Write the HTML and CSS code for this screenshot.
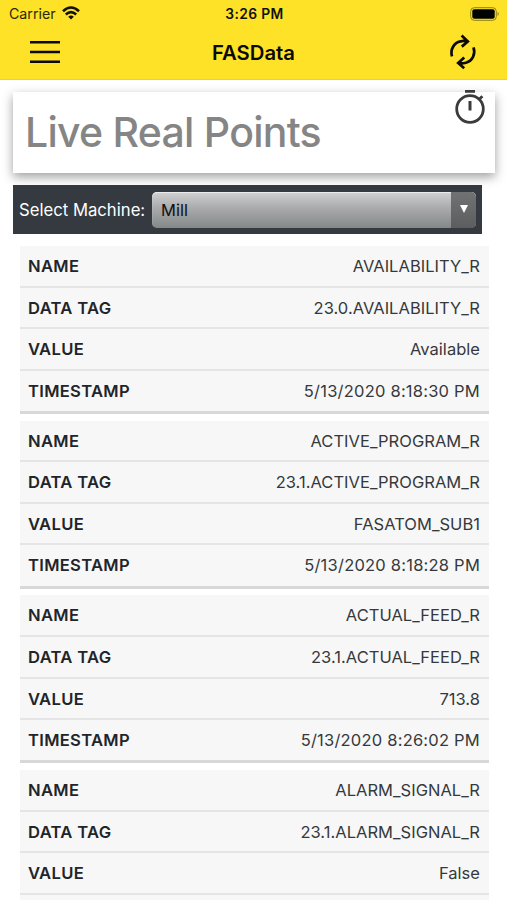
FILE: index.html
```html
<!DOCTYPE html>
<html lang="en">
<head>
<meta charset="utf-8">
<title>FASData</title>
<link rel="stylesheet" href="styles.css">
</head>
<body>
<header class="top">
  <div class="status">
    <div class="carrier"><span>Carrier</span>
      <svg width="18" height="14" viewBox="0 0 18 14" fill="none" stroke="#111" stroke-width="2.6"><path d="M1 5.2Q9-2.2 17 5.2M3.8 8.5Q9 3.8 14.2 8.5"/><path d="M6.2 10.7Q9 8.3 11.8 10.7L9 13.6Z" fill="#111" stroke="none"/></svg>
    </div>
    <div class="clock">3:26 PM</div>
    <svg class="battery" width="30" height="14" viewBox="0 0 30 14"><rect x=".7" y=".7" width="25.6" height="12.6" rx="3.6" fill="none" stroke="#8e7f17"/><rect x="2.3" y="2.3" width="22.4" height="9.4" rx="2" fill="#000"/><path d="M27.6 4.8Q30 7 27.6 9.2Z" fill="#8e7f17"/></svg>
  </div>
  <nav class="nav">
    <svg class="menu" width="30" height="24" viewBox="0 0 30 24" stroke="#0c0a00" stroke-width="2.4"><path d="M0 2.2H30M0 12H30M0 21.8H30"/></svg>
    <h1>FASData</h1>
    <svg class="sync" width="28" height="36" viewBox="0 0 28 36" fill="none" stroke="#0c0a00" stroke-width="2.7"><path d="M3 22.4C1 15.5 5 8.5 11.5 7.3Q15 6.6 18 7.4M12.6 1.6L18.8 7.5L12.8 12.6M24.5 13.4C26.8 20 23.5 27 17 28.7Q13 29.8 9.4 29M15.2 23.4L9.2 29L15.2 34.3"/></svg>
  </nav>
</header>
<main>
  <section class="title">
    <h2>Live Real Points</h2>
    <svg class="timer" width="32" height="36" viewBox="0 0 32 36" fill="none" stroke="#3b3b3b" stroke-width="2.8"><circle cx="15" cy="20" r="13.3"/><path d="M10 2.3H20M24.2 10.2L27.4 7.3"/><path d="M15 12V21.5" stroke-width="3"/></svg>
  </section>
  <div class="picker">
    <span class="label">Select Machine:</span>
    <div class="select"><span class="chosen">Mill</span><span class="arrow"><svg width="8" height="8" viewBox="0 0 8 8"><path d="M0 0H8L4 8Z" fill="#fff"/></svg></span></div>
  </div>
  <div class="points">
    <dl>
      <div><dt>NAME</dt><dd>AVAILABILITY_R</dd></div>
      <div><dt>DATA TAG</dt><dd>23.0.AVAILABILITY_R</dd></div>
      <div><dt>VALUE</dt><dd>Available</dd></div>
      <div><dt>TIMESTAMP</dt><dd class="time">5/13/2020 8:18:30 PM</dd></div>
    </dl>
    <dl>
      <div><dt>NAME</dt><dd>ACTIVE_PROGRAM_R</dd></div>
      <div><dt>DATA TAG</dt><dd>23.1.ACTIVE_PROGRAM_R</dd></div>
      <div><dt>VALUE</dt><dd>FASATOM_SUB1</dd></div>
      <div><dt>TIMESTAMP</dt><dd class="time">5/13/2020 8:18:28 PM</dd></div>
    </dl>
    <dl>
      <div><dt>NAME</dt><dd>ACTUAL_FEED_R</dd></div>
      <div><dt>DATA TAG</dt><dd>23.1.ACTUAL_FEED_R</dd></div>
      <div><dt>VALUE</dt><dd>713.8</dd></div>
      <div><dt>TIMESTAMP</dt><dd class="time">5/13/2020 8:26:02 PM</dd></div>
    </dl>
    <dl>
      <div><dt>NAME</dt><dd>ALARM_SIGNAL_R</dd></div>
      <div><dt>DATA TAG</dt><dd>23.1.ALARM_SIGNAL_R</dd></div>
      <div><dt>VALUE</dt><dd>False</dd></div>
      <div></div>
    </dl>
  </div>
</main>
</body>
</html>
```
FILE: styles.css
```css
* { box-sizing: border-box; }
html, body { height: 900px; overflow: hidden; }
body { margin: 0; background: #fff; color: #212529; font-family: Inter, "Liberation Sans", sans-serif; }
h1, h2, dl, dd, dt { margin: 0; }
svg { display: block; }

.top { height: 80px; background: #fee227; border-bottom: 1px solid #e4cf5c; color: #111; }
.status { height: 27px; display: grid; grid-template-columns: 1fr auto 1fr; align-items: center; padding: 0 7px 0 9px; }
.carrier { display: flex; align-items: center; gap: 6px; font-size: 14.2px; color: #2b2706; }
.carrier svg { margin-top: -2px; }
.clock { font-size: 13.8px; font-weight: 600; letter-spacing: .4px; }
.battery { justify-self: end; }
.nav { height: 50px; display: grid; grid-template-columns: 1fr auto 1fr; align-items: center; padding: 0 30px; }
.nav h1 { font-size: 20.3px; font-weight: 600; line-height: 24px; color: #0c0a00; padding-top: 1px; }
.sync { justify-self: end; }

main { padding: 12px 12px 0 13px; }
.title { position: relative; height: 81px; background: #fff; box-shadow: 0 4px 10px rgba(0,0,0,.38); padding: 15px 12px; }
.title h2 { font-size: 41px; line-height: 51px; font-weight: 450; letter-spacing: -.75px; color: #858585; white-space: nowrap; }
.timer { position: absolute; right: 8px; top: -3px; }

.picker { width: 469px; height: 49px; margin-top: 12px; display: flex; align-items: center; background: #343a40; padding: 0 6px; }
.label { width: 133px; font-size: 16.7px; color: #fff; white-space: nowrap; }
.select { flex: 1; height: 36px; display: flex; border-radius: 5px; overflow: hidden; background: linear-gradient(#d0d1d2, #a8aaab 45%, #858889); box-shadow: inset 0 1px 1px #eee; }
.chosen { flex: 1; padding-left: 9px; font-size: 16.5px; line-height: 36px; color: #111; }
.arrow { width: 25px; display: flex; justify-content: center; padding-top: 13px; background: linear-gradient(#707273, #5b5d5e); }

.points { width: 469px; margin: 12px 0 0 7px; }
dl { margin-bottom: 6.7px; }
dl > div { height: 41.6px; display: flex; justify-content: space-between; background: #f7f7f7; border-bottom: 2px solid #e5e5e5; padding: 0 9px 0 8px; line-height: 40px; }
dl > div:last-child { height: 43.2px; border-bottom: 3px solid #d8d8d8; }
dt { font-size: 16.6px; font-weight: 600; letter-spacing: .3px; }
dd { font-size: 16.5px; letter-spacing: .03px; color: #35393c; }
.time { letter-spacing: .22px; }
```
